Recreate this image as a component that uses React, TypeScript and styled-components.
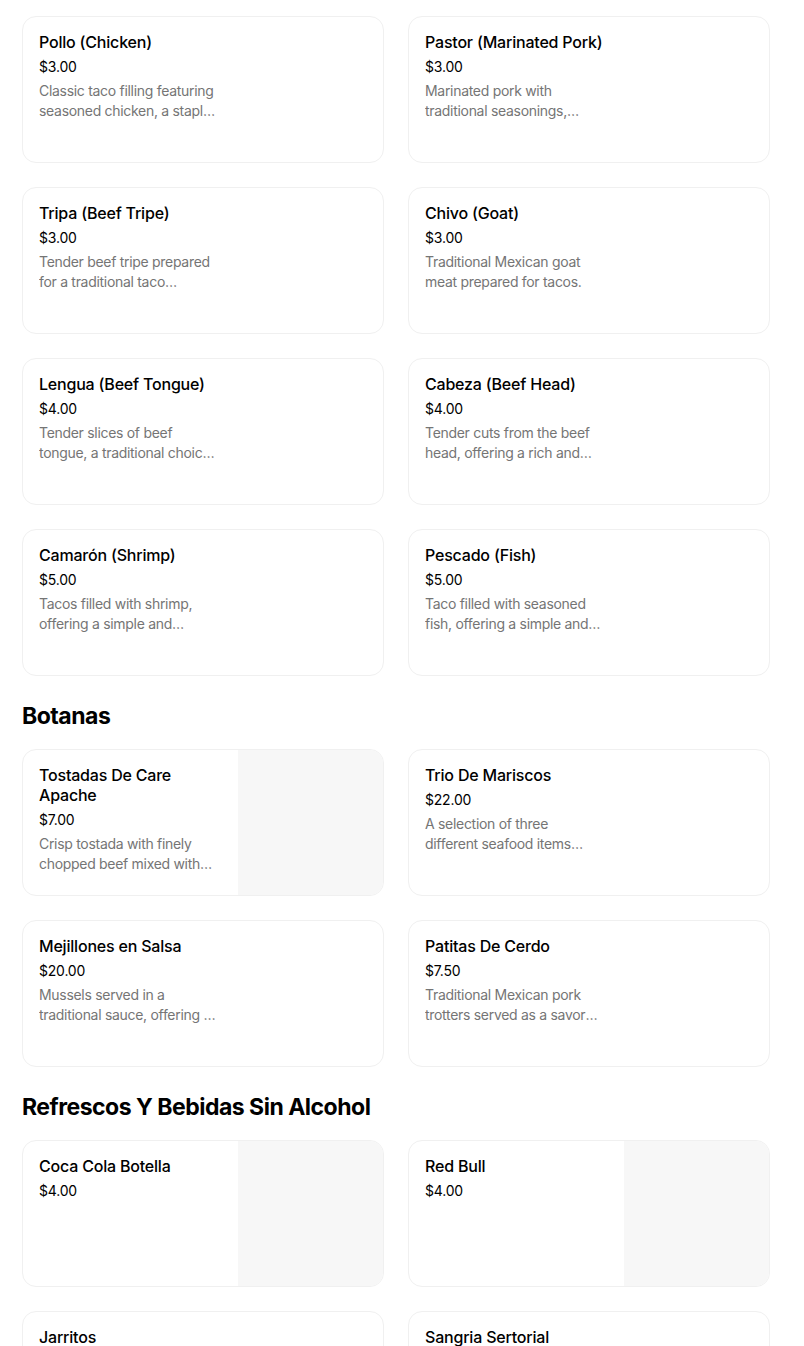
import { createGlobalStyle } from "styled-components"
import styled from "styled-components"

type Item = {
  name: string
  price: string
  desc?: string
  image?: boolean
}

type Section = {
  title?: string
  items: Item[]
}

const sections: Section[] = [
  {
    items: [
      { name: 'Pollo (Chicken)', price: '$3.00', desc: 'Classic taco filling featuring seasoned chicken, a staple in Mexican cuisine.' },
      { name: 'Pastor (Marinated Pork)', price: '$3.00', desc: 'Marinated pork with traditional seasonings, commonly served in tacos.' },
      { name: 'Tripa (Beef Tripe)', price: '$3.00', desc: 'Tender beef tripe prepared for a traditional taco experience.' },
      { name: 'Chivo (Goat)', price: '$3.00', desc: 'Traditional Mexican goat meat prepared for tacos.' },
      { name: 'Lengua (Beef Tongue)', price: '$4.00', desc: 'Tender slices of beef tongue, a traditional choice for tacos.' },
      { name: 'Cabeza (Beef Head)', price: '$4.00', desc: 'Tender cuts from the beef head, offering a rich and flavorful taco.' },
      { name: 'Camarón (Shrimp)', price: '$5.00', desc: 'Tacos filled with shrimp, offering a simple and delicious taste.' },
      { name: 'Pescado (Fish)', price: '$5.00', desc: 'Taco filled with seasoned fish, offering a simple and tasty option.' },
    ],
  },
  {
    title: 'Botanas',
    items: [
      { name: 'Tostadas De Care Apache', price: '$7.00', desc: 'Crisp tostada with finely chopped beef mixed with lime and vegetables.', image: true },
      { name: 'Trio De Mariscos', price: '$22.00', desc: 'A selection of three different seafood items prepared together.' },
      { name: 'Mejillones en Salsa', price: '$20.00', desc: 'Mussels served in a traditional sauce, offering a savory bite.' },
      { name: 'Patitas De Cerdo', price: '$7.50', desc: 'Traditional Mexican pork trotters served as a savory appetizer.' },
    ],
  },
  {
    title: 'Refrescos Y Bebidas Sin Alcohol',
    items: [
      { name: 'Coca Cola Botella', price: '$4.00', image: true },
      { name: 'Red Bull', price: '$4.00', image: true },
      { name: 'Jarritos', price: '$3.00' },
      { name: 'Sangria Sertorial', price: '$3.00' },
    ],
  },
]

function App() {
  return <>
    <GlobalStyle />
    <Page>
      {sections.map((section, i) => (
        <div key={i}>
          {section.title && <Heading>{section.title}</Heading>}
          <Grid>
            {section.items.map((item) => (
              <Card key={item.name}>
                <Info>
                  <Name>{item.name}</Name>
                  <Price>{item.price}</Price>
                  {item.desc && <Desc>{item.desc}</Desc>}
                </Info>
                <Thumb $filled={!!item.image} />
              </Card>
            ))}
          </Grid>
        </div>
      ))}
    </Page>
  </>
}

export default App

const GlobalStyle = createGlobalStyle`
  body {
    margin: 0;
    background: #fff;
    font-family: Inter, "Noto Sans", "Liberation Sans", sans-serif;
    color: #000;
  }
`

const Page = styled.div`
  width: 748px;
  padding: 16px 0 0 22px;
`

const Heading = styled.h2`
  margin: 24px 0 17px;
  font-size: 23px;
  line-height: 32px;
  font-weight: 700;
  letter-spacing: -0.5px;
`

const Grid = styled.div`
  display: grid;
  grid-template-columns: 1fr 1fr;
  gap: 24px;
`

const Card = styled.div`
  display: flex;
  height: 147px;
  box-sizing: border-box;
  border: 1px solid #f0f0f0;
  border-radius: 14px;
  overflow: hidden;
  background: #fff;
`

const Info = styled.div`
  flex: 1;
  padding: 15px 14px 15px 16px;
  min-width: 0;
`

const Name = styled.div`
  font-size: 16px;
  line-height: 20px;
  font-weight: 500;
  letter-spacing: -0.2px;
  color: #000;
`

const Price = styled.div`
  margin-top: 5px;
  font-size: 14px;
  line-height: 20px;
  letter-spacing: -0.2px;
  color: #000;
`

const Desc = styled.div`
  margin-top: 4px;
  max-width: 178px;
  font-size: 14px;
  line-height: 20px;
  letter-spacing: -0.3px;
  color: #757575;
  display: -webkit-box;
  -webkit-line-clamp: 2;
  -webkit-box-orient: vertical;
  overflow: hidden;
`

const Thumb = styled.div<{ $filled: boolean }>`
  width: 145px;
  flex-shrink: 0;
  background: ${p => p.$filled ? '#f7f7f7' : 'transparent'};
`
